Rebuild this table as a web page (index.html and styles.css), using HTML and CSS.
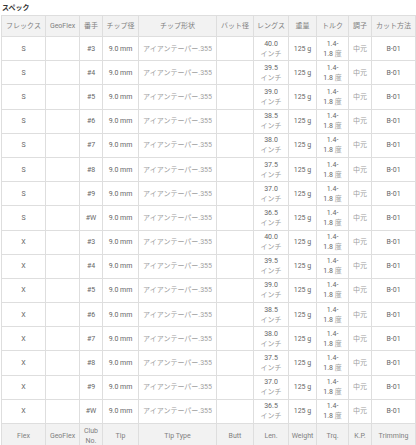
FILE: index.html
```html
<!DOCTYPE html>
<html lang="ja">
<head>
<meta charset="utf-8">
<link rel="stylesheet" href="styles.css">
</head>
<body>
<div class="page">
  <h2 class="title">スペック</h2>
  <table class="spec">
    <colgroup>
      <col class="c-flex"><col class="c-geo"><col class="c-no"><col class="c-tip"><col class="c-type"><col class="c-butt"><col class="c-len"><col class="c-wt"><col class="c-trq"><col class="c-kp"><col class="c-trim">
    </colgroup>
    <thead>
      <tr><th>フレックス</th><th>GeoFlex</th><th>番手</th><th>チップ径</th><th>チップ形状</th><th>バット径</th><th>レングス</th><th>重量</th><th>トルク</th><th>調子</th><th>カット方法</th></tr>
    </thead>
    <tbody>
      <tr><td>S</td><td></td><td>#3</td><td>9.0 mm</td><td class="lt">アイアンテーパー.355</td><td></td><td>40.0<br><span class="lt">インチ</span></td><td>125 g</td><td>1.4-<br>1.8 <span class="lt">度</span></td><td class="lt">中元</td><td>B-01</td></tr>
      <tr><td>S</td><td></td><td>#4</td><td>9.0 mm</td><td class="lt">アイアンテーパー.355</td><td></td><td>39.5<br><span class="lt">インチ</span></td><td>125 g</td><td>1.4-<br>1.8 <span class="lt">度</span></td><td class="lt">中元</td><td>B-01</td></tr>
      <tr><td>S</td><td></td><td>#5</td><td>9.0 mm</td><td class="lt">アイアンテーパー.355</td><td></td><td>39.0<br><span class="lt">インチ</span></td><td>125 g</td><td>1.4-<br>1.8 <span class="lt">度</span></td><td class="lt">中元</td><td>B-01</td></tr>
      <tr><td>S</td><td></td><td>#6</td><td>9.0 mm</td><td class="lt">アイアンテーパー.355</td><td></td><td>38.5<br><span class="lt">インチ</span></td><td>125 g</td><td>1.4-<br>1.8 <span class="lt">度</span></td><td class="lt">中元</td><td>B-01</td></tr>
      <tr><td>S</td><td></td><td>#7</td><td>9.0 mm</td><td class="lt">アイアンテーパー.355</td><td></td><td>38.0<br><span class="lt">インチ</span></td><td>125 g</td><td>1.4-<br>1.8 <span class="lt">度</span></td><td class="lt">中元</td><td>B-01</td></tr>
      <tr><td>S</td><td></td><td>#8</td><td>9.0 mm</td><td class="lt">アイアンテーパー.355</td><td></td><td>37.5<br><span class="lt">インチ</span></td><td>125 g</td><td>1.4-<br>1.8 <span class="lt">度</span></td><td class="lt">中元</td><td>B-01</td></tr>
      <tr><td>S</td><td></td><td>#9</td><td>9.0 mm</td><td class="lt">アイアンテーパー.355</td><td></td><td>37.0<br><span class="lt">インチ</span></td><td>125 g</td><td>1.4-<br>1.8 <span class="lt">度</span></td><td class="lt">中元</td><td>B-01</td></tr>
      <tr><td>S</td><td></td><td>#W</td><td>9.0 mm</td><td class="lt">アイアンテーパー.355</td><td></td><td>36.5<br><span class="lt">インチ</span></td><td>125 g</td><td>1.4-<br>1.8 <span class="lt">度</span></td><td class="lt">中元</td><td>B-01</td></tr>
      <tr><td>X</td><td></td><td>#3</td><td>9.0 mm</td><td class="lt">アイアンテーパー.355</td><td></td><td>40.0<br><span class="lt">インチ</span></td><td>125 g</td><td>1.4-<br>1.8 <span class="lt">度</span></td><td class="lt">中元</td><td>B-01</td></tr>
      <tr><td>X</td><td></td><td>#4</td><td>9.0 mm</td><td class="lt">アイアンテーパー.355</td><td></td><td>39.5<br><span class="lt">インチ</span></td><td>125 g</td><td>1.4-<br>1.8 <span class="lt">度</span></td><td class="lt">中元</td><td>B-01</td></tr>
      <tr><td>X</td><td></td><td>#5</td><td>9.0 mm</td><td class="lt">アイアンテーパー.355</td><td></td><td>39.0<br><span class="lt">インチ</span></td><td>125 g</td><td>1.4-<br>1.8 <span class="lt">度</span></td><td class="lt">中元</td><td>B-01</td></tr>
      <tr><td>X</td><td></td><td>#6</td><td>9.0 mm</td><td class="lt">アイアンテーパー.355</td><td></td><td>38.5<br><span class="lt">インチ</span></td><td>125 g</td><td>1.4-<br>1.8 <span class="lt">度</span></td><td class="lt">中元</td><td>B-01</td></tr>
      <tr><td>X</td><td></td><td>#7</td><td>9.0 mm</td><td class="lt">アイアンテーパー.355</td><td></td><td>38.0<br><span class="lt">インチ</span></td><td>125 g</td><td>1.4-<br>1.8 <span class="lt">度</span></td><td class="lt">中元</td><td>B-01</td></tr>
      <tr><td>X</td><td></td><td>#8</td><td>9.0 mm</td><td class="lt">アイアンテーパー.355</td><td></td><td>37.5<br><span class="lt">インチ</span></td><td>125 g</td><td>1.4-<br>1.8 <span class="lt">度</span></td><td class="lt">中元</td><td>B-01</td></tr>
      <tr><td>X</td><td></td><td>#9</td><td>9.0 mm</td><td class="lt">アイアンテーパー.355</td><td></td><td>37.0<br><span class="lt">インチ</span></td><td>125 g</td><td>1.4-<br>1.8 <span class="lt">度</span></td><td class="lt">中元</td><td>B-01</td></tr>
      <tr><td>X</td><td></td><td>#W</td><td>9.0 mm</td><td class="lt">アイアンテーパー.355</td><td></td><td>36.5<br><span class="lt">インチ</span></td><td>125 g</td><td>1.4-<br>1.8 <span class="lt">度</span></td><td class="lt">中元</td><td>B-01</td></tr>
    </tbody>
    <tfoot>
      <tr><th>Flex</th><th>GeoFlex</th><th>Club<br>No.</th><th>Tip</th><th>Tip Type</th><th>Butt</th><th>Len.</th><th>Weight</th><th>Trq.</th><th>K.P.</th><th>Trimming</th></tr>
    </tfoot>
  </table>
</div>
</body>
</html>
```

FILE: styles.css
```css
html, body {
  margin: 0;
  padding: 0;
  background: #fff;
}

body {
  font-family: Roboto, "Noto Sans CJK JP", sans-serif;
  font-size: 7px;
  color: #666;
}

.page {
  padding: 0 1px;
}

.title {
  margin: 0;
  height: 15px;
  line-height: 16px;
  font-size: 7px;
  font-weight: 700;
  color: #333;
  padding-left: 1px;
}

.spec {
  border-collapse: collapse;
  table-layout: fixed;
  width: 415px;
}

.spec th,
.spec td {
  border: 1px solid #dedede;
  text-align: center;
  vertical-align: middle;
  line-height: 10px;
  padding: 1.6px 1px;
  font-weight: 400;
  white-space: nowrap;
  overflow: hidden;
}

.spec thead th {
  background: #f2f2f2;
  color: #808080;
  padding: 5px 1px;
}

.spec tfoot th {
  background: #f2f2f2;
  color: #808080;
  padding: 2px 1px;
}

.lt {
  color: #a0a0a0;
}

.c-flex { width: 44px; }
.c-geo { width: 34px; }
.c-no { width: 23px; }
.c-tip { width: 36px; }
.c-type { width: 78px; }
.c-butt { width: 37px; }
.c-len { width: 35px; }
.c-wt { width: 28px; }
.c-trq { width: 32px; }
.c-kp { width: 23px; }
.c-trim { width: 44px; }
```
